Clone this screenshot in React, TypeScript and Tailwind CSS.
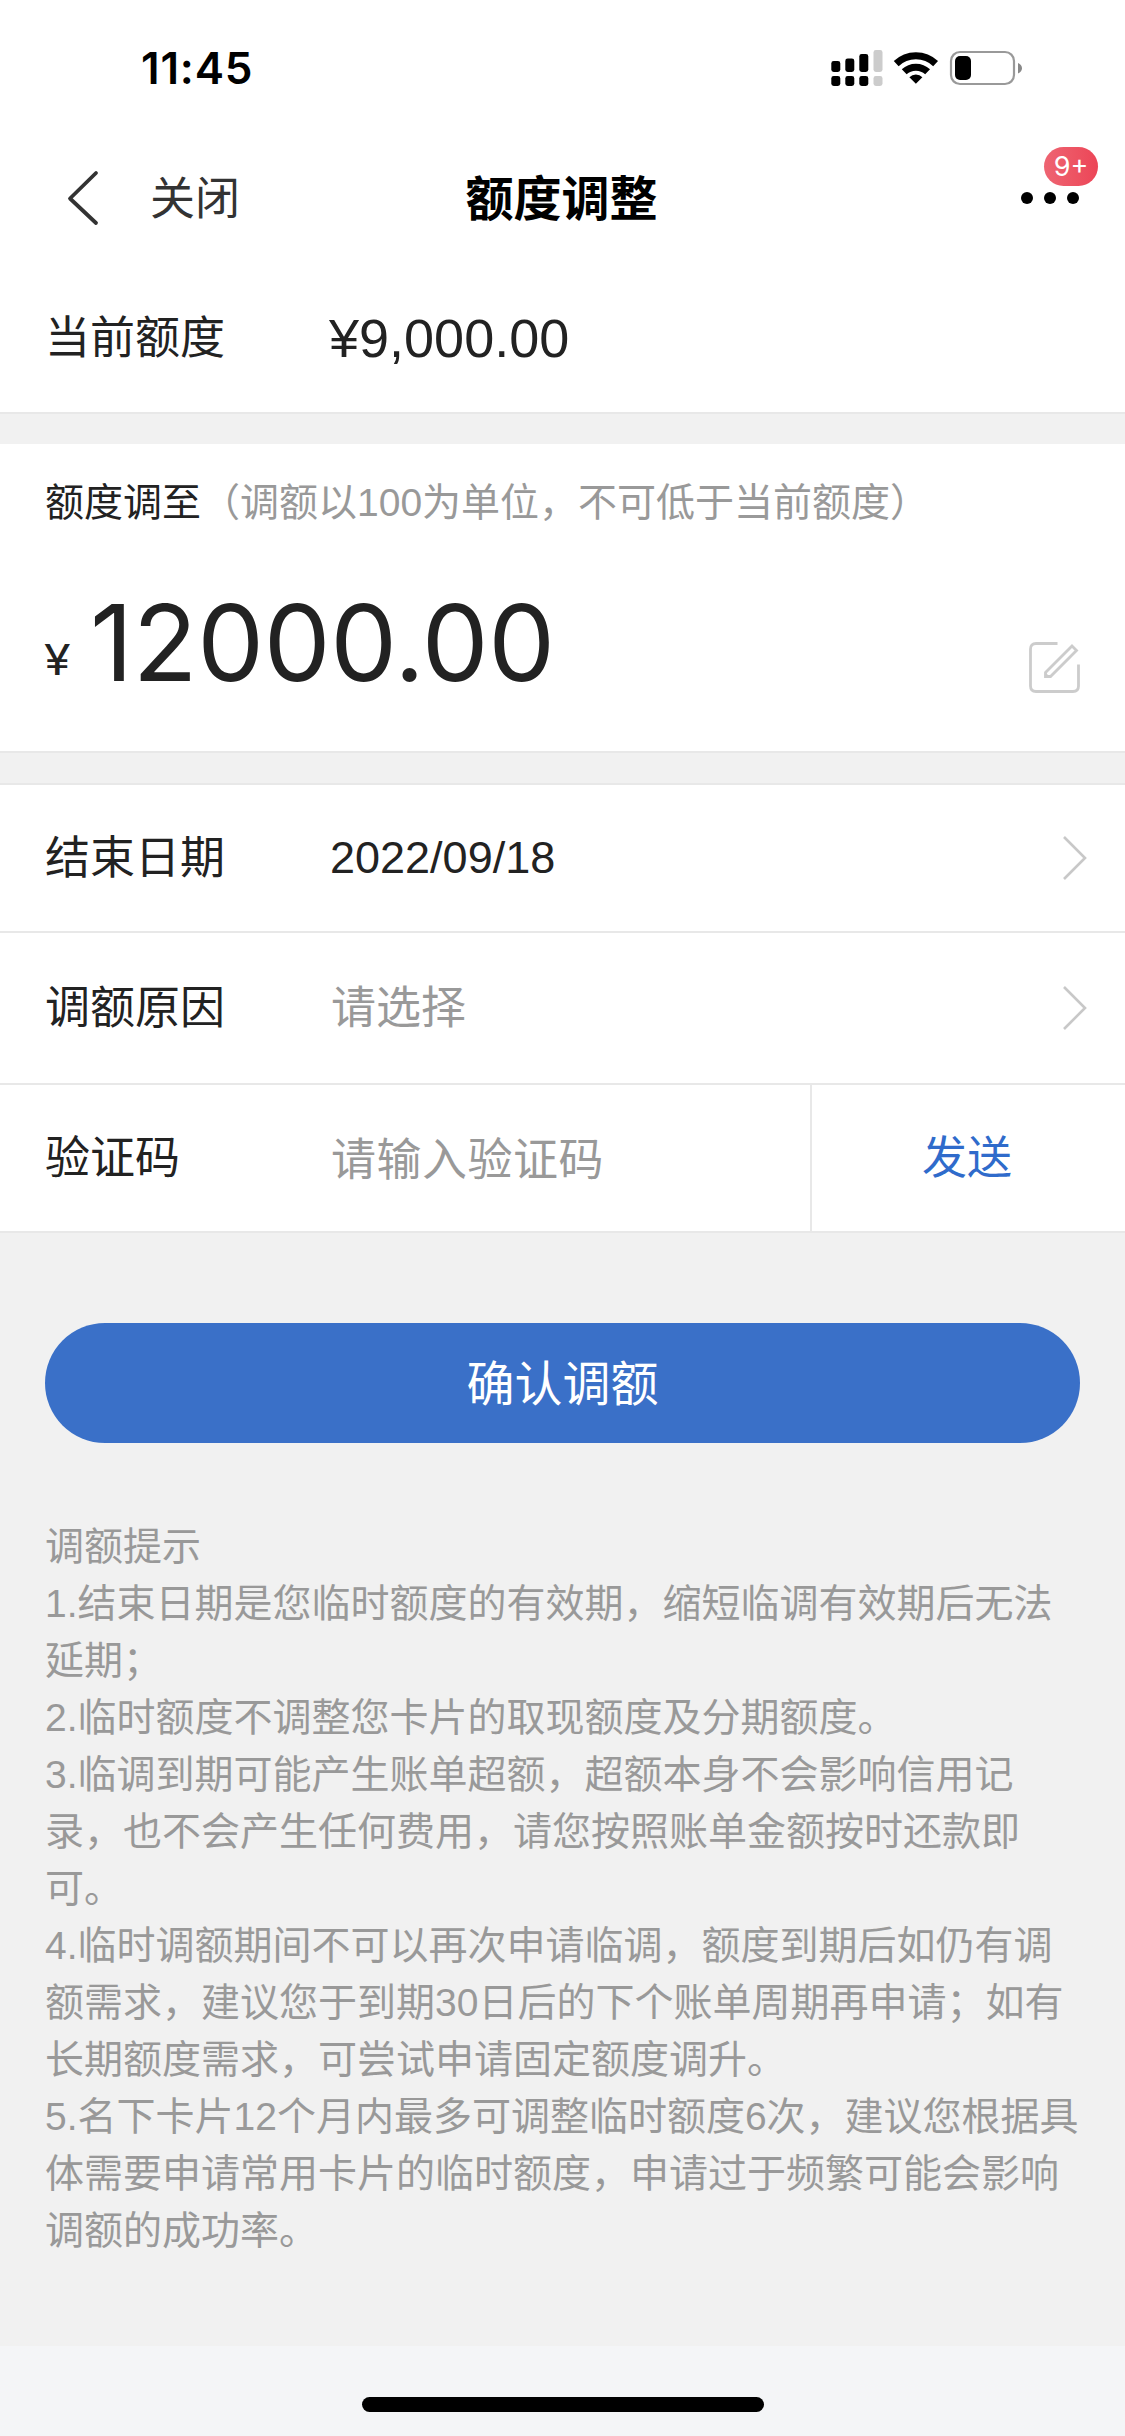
import type { ReactNode } from "react";

const SANS = "font-['Liberation_Sans','Noto_Sans_CJK_SC',sans-serif]";

function StatusBar() {
  return (
    <header className="flex h-[132px] items-start justify-between pt-[45px] pr-[103px] pl-[141px]">
      <span className="font-['Inter',sans-serif] text-[44px] leading-[46px] font-semibold tracking-[0.8px] text-black">
        11:45
      </span>
      <svg className="mt-[3px] h-[40px] w-[192px]" viewBox="830 48 192 40" fill="#000">
        <rect x="831.3" y="61" width="9" height="11" rx="2.4" />
        <rect x="845.3" y="58.5" width="9" height="13.5" rx="2.4" />
        <rect x="859.3" y="54" width="9" height="18" rx="2.4" />
        <rect x="873.5" y="50" width="9" height="22" rx="2.4" fill="#ccc" />
        <rect x="831.3" y="76" width="9" height="10" rx="2.4" />
        <rect x="845.3" y="76" width="9" height="10" rx="2.4" />
        <rect x="859.3" y="76" width="9" height="10" rx="2.4" />
        <rect x="873.5" y="76" width="9" height="10" rx="2.4" fill="#ccc" />
        <g fill="none" stroke="#000" strokeWidth="7">
          <path d="M896.2 63.6A28.5 28.5 0 0 1 935.6 63.6" />
          <path d="M904.2 71.8A17 17 0 0 1 927.6 71.8" />
        </g>
        <path d="M915.9 83.8L909.4 77.3A9.2 9.2 0 0 1 922.4 77.3Z" />
        <rect x="951" y="52" width="63" height="32" rx="9" fill="none" stroke="#999" strokeWidth="2.2" />
        <rect x="955" y="56" width="16" height="24" rx="5" />
        <path d="M1018 63Q1022 65 1022 68.2T1018 73.5Z" fill="#888" />
      </svg>
    </header>
  );
}

function NavBar() {
  return (
    <nav className="flex h-[132px] items-center justify-between pr-[46px] pl-[66px]">
      <div className="flex w-[298px] items-center">
        <svg className="h-[58px] w-[34px]" viewBox="0 0 34 58" fill="none" stroke="#333" strokeWidth="3.8" strokeLinecap="round" strokeLinejoin="round">
          <path d="M30 4L4 29.5L30 54" />
        </svg>
        <span className="mt-[3px] ml-[50px] text-[45px] leading-[60px] text-[#333]">关闭</span>
      </div>
      <h1 className="mt-[3px] text-[48px] leading-[60px] font-bold text-black">额度调整</h1>
      <div className="flex w-[320px] justify-end">
        <div className="relative flex h-[12px] w-[58px] justify-between">
          <i className="size-[12px] rounded-full bg-black" />
          <i className="size-[12px] rounded-full bg-black" />
          <i className="size-[12px] rounded-full bg-black" />
          <span className="absolute top-[-45px] left-[23px] h-[39px] w-[54px] rounded-full bg-linear-to-r from-[#ee6472] to-[#ec4557] text-center font-['Inter',sans-serif] text-[27px] leading-[39px] font-normal text-white">
            9+
          </span>
        </div>
      </div>
    </nav>
  );
}

function Chevron() {
  return (
    <svg className="mr-[37px] ml-auto h-[44px] w-[26px]" viewBox="0 0 26 44" fill="none" stroke="#c8c8c8" strokeWidth="2.6">
      <path d="M2 1L23 22L2 43" />
    </svg>
  );
}

function Row({ label, height, children }: { label: string; height: string; children: ReactNode }) {
  return (
    <div className={`flex items-center border-b-2 border-[#e8e8e8] bg-white pl-[45px] text-[45px] leading-[60px] text-[#222] ${height}`}>
      <span className="mt-[2px] w-[284px] shrink-0">{label}</span>
      {children}
    </div>
  );
}

const TIPS = [
  "调额提示",
  "1.结束日期是您临时额度的有效期，缩短临调有效期后无法",
  "延期；",
  "2.临时额度不调整您卡片的取现额度及分期额度。",
  "3.临调到期可能产生账单超额，超额本身不会影响信用记",
  "录，也不会产生任何费用，请您按照账单金额按时还款即",
  "可。",
  "4.临时调额期间不可以再次申请临调，额度到期后如仍有调",
  "额需求，建议您于到期30日后的下个账单周期再申请；如有",
  "长期额度需求，可尝试申请固定额度调升。",
  "5.名下卡片12个月内最多可调整临时额度6次，建议您根据具",
  "体需要申请常用卡片的临时额度，申请过于频繁可能会影响",
  "调额的成功率。",
];

export default function App() {
  return (
    <div lang="zh-CN" className={`flex h-[2436px] w-[1125px] flex-col overflow-hidden bg-[#f1f1f1] ${SANS}`}>
      <div className="bg-white">
        <StatusBar />
        <NavBar />
      </div>
      <Row label="当前额度" height="h-[150px]">
        <span className="text-[54px]">¥9,000.00</span>
      </Row>

      <section className="mt-[30px] flex h-[309px] flex-col border-b-2 border-[#e8e8e8] bg-white pr-[45px] pl-[45px]">
        <p className="mt-[30px] text-[39px] leading-[58px] whitespace-nowrap text-[#222]">
          额度调至<span className="text-[#999]">（调额以100为单位，不可低于当前额度）</span>
        </p>
        <div className="mt-[50px] flex items-start font-['Inter',sans-serif] text-[#222]">
          <span className="mt-[53px] ml-[-1px] w-[46px] text-[42px] leading-[50px]">
            <span className="inline-block origin-left scale-x-115">¥</span>
          </span>
          <span className="mt-px text-[106px] leading-[120px] tracking-[-0.3px]">12000.00</span>
          <svg className="mt-[60px] ml-auto h-[51px] w-[51px]" viewBox="0 0 51 51" fill="none" stroke="#ccc" strokeWidth="2.8">
            <path d="M28.5 1.5H7Q1.5 1.5 1.5 7V44Q1.5 49.5 7 49.5H44Q49.5 49.5 49.5 44V22.5" />
            <path d="M16.5 30.5L43 4L47.5 8.5L21.5 34.5H16.5Z" />
            <path d="M16 30L21.5 35.5H15.5Z" fill="#ccc" stroke="none" />
          </svg>
        </div>
      </section>

      <section className="mt-[30px] border-t-2 border-[#e8e8e8]">
        <Row label="结束日期" height="h-[148px]">
          <span className="ml-px">2022/09/18</span>
          <Chevron />
        </Row>
        <Row label="调额原因" height="h-[152px]">
          <span className="mt-[2px] ml-[2px] text-[#999]">请选择</span>
          <Chevron />
        </Row>
        <Row label="验证码" height="h-[148px]">
          <span className="mt-[6px] ml-[2px] tracking-[0.5px] text-[#999]">请输入验证码</span>
          <button className="ml-auto h-full w-[315px] border-l-2 border-[#e8e8e8] pt-[2px] pr-[3px] text-[#2f6bcb]">发送</button>
        </Row>
      </section>

      <button className="mx-[45px] mt-[90px] h-[120px] shrink-0 rounded-full bg-[#3a70c8] pt-[3px] text-[48px] leading-[60px] text-white">
        确认调额
      </button>

      <div className="mt-[75px] ml-[45px] text-[39px] leading-[57px] whitespace-nowrap text-[#999]">
        {TIPS.map((line) => (
          <p key={line}>{line}</p>
        ))}
      </div>

      <footer className="mt-auto flex h-[90px] shrink-0 justify-center bg-[#f4f5f7] pt-[51px]">
        <div className="h-[15px] w-[402px] rounded-full bg-black" />
      </footer>
    </div>
  );
}
